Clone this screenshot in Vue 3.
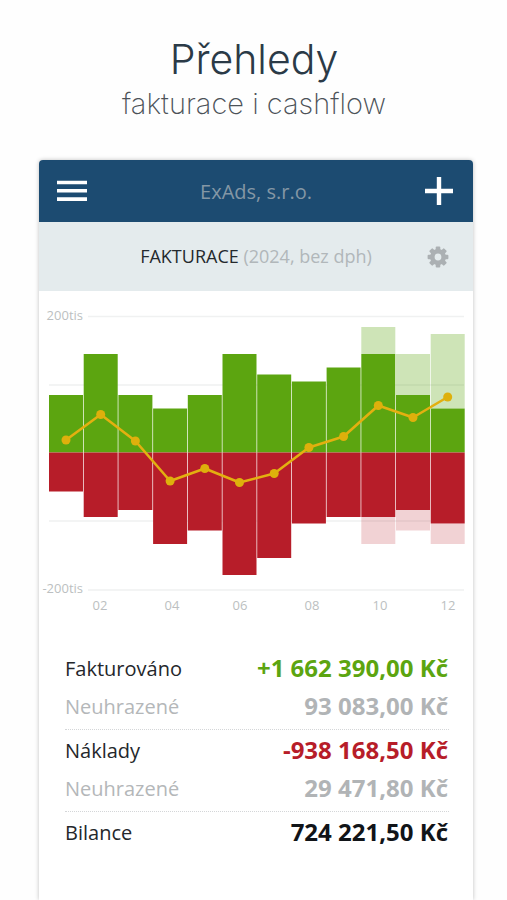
<template>
  <div class="page">
    <header class="intro">
      <h1>Přehledy</h1>
      <p>fakturace i cashflow</p>
    </header>

    <main class="card">
      <nav class="topbar">
        <button type="button" class="icon-btn" aria-label="Menu">
          <svg width="30" height="22" viewBox="0 0 30 22">
            <path d="M0 2.5H30M0 10.8H30M0 19.1H30" stroke="#fff" stroke-width="3.6" />
          </svg>
        </button>
        <span class="company">ExAds, s.r.o.</span>
        <button type="button" class="icon-btn" aria-label="Přidat">
          <svg width="28" height="28" viewBox="0 0 28 28">
            <path d="M14 0V28M0 14H28" stroke="#fff" stroke-width="4.4" />
          </svg>
        </button>
      </nav>

      <div class="subbar">
        <h2>FAKTURACE <span>(2024, bez dph)</span></h2>
        <button type="button" class="icon-btn" aria-label="Nastavení">
          <svg width="22" height="22" viewBox="-11 -11 22 22">
            <g fill="#abb0b3">
              <rect v-for="a in 4" :key="a" x="-2.3" y="-10.4" width="4.6" height="20.8" rx="1" :transform="`rotate(${a * 45})`" />
              <circle r="8" />
            </g>
            <circle r="3.4" fill="#e4ebed" />
          </svg>
        </button>
      </div>

      <svg class="chart" viewBox="0 0 434 340" role="img" aria-label="Fakturace podle měsíců">
        <g stroke="#f0f1f1" stroke-width="1.4">
          <path d="M49 25.5H425M10 94H425M10 230H425M49 299H425" />
        </g>

        <g v-for="(m, i) in months" :key="i">
          <rect v-if="m.incomeOpen" :x="barX(i)" :y="ZERO - m.incomeOpen" :width="BAR" :height="m.incomeOpen - m.income" fill="#5ca510" fill-opacity="0.3" />
          <rect v-if="m.costOpen" :x="barX(i)" :y="ZERO + m.cost" :width="BAR" :height="m.costOpen - m.cost" fill="#b71d29" fill-opacity="0.2" />
          <rect :x="barX(i)" :y="ZERO - m.income" :width="BAR" :height="m.income" fill="#5ca510" />
          <rect :x="barX(i)" :y="ZERO" :width="BAR" :height="m.cost" fill="#b71d29" />
        </g>

        <polyline :points="linePoints" fill="none" stroke="#e3b010" stroke-width="2.6" stroke-linejoin="round" />
        <circle v-for="(m, i) in months" :key="'p' + i" :cx="pointX(i)" :cy="ZERO - m.balance" r="4.5" fill="#deb00c" />

        <g class="axis">
          <text x="44" y="29" text-anchor="end">200tis</text>
          <text x="44" y="302" text-anchor="end">-200tis</text>
          <text v-for="l in labels" :key="l.text" :x="l.x" y="319" text-anchor="middle">{{ l.text }}</text>
        </g>
      </svg>

      <dl class="summary">
        <div v-for="(group, g) in summary" :key="g" class="group">
          <div v-for="row in group" :key="row.label" class="row" :class="row.kind">
            <dt>{{ row.label }}</dt>
            <dd>{{ row.value }}</dd>
          </div>
        </div>
      </dl>
    </main>
  </div>
</template>

<script setup>
import { computed } from 'vue';

const ZERO = 161.5;
const BAR = 34;
const STEP = 34.7;

const months = [
  { income: 57.5, cost: 39, balance: 12.5 },
  { income: 98.5, cost: 64.5, balance: 38 },
  { income: 57.5, cost: 57.5, balance: 11.5 },
  { income: 44, cost: 91.5, balance: -28.5 },
  { income: 57.5, cost: 78, balance: -16 },
  { income: 98.5, cost: 122.5, balance: -30 },
  { income: 78, cost: 105.5, balance: -21 },
  { income: 71, cost: 71, balance: 5 },
  { income: 85, cost: 64.5, balance: 16 },
  { income: 98.5, incomeOpen: 125.5, cost: 64.5, costOpen: 91.5, balance: 47 },
  { income: 57.5, incomeOpen: 98.5, cost: 57.5, costOpen: 78, balance: 35 },
  { income: 44, incomeOpen: 118.5, cost: 71, costOpen: 91.5, balance: 55.5 },
];

const labels = [
  { text: '02', x: 61 },
  { text: '04', x: 133 },
  { text: '06', x: 201 },
  { text: '08', x: 273 },
  { text: '10', x: 341 },
  { text: '12', x: 409 },
];

const barX = (i) => 10 + i * STEP;
const pointX = (i) => 27 + i * STEP;

const linePoints = computed(() =>
  months.map((m, i) => `${pointX(i)},${ZERO - m.balance}`).join(' ')
);

const summary = [
  [
    { label: 'Fakturováno', value: '+1 662 390,00 Kč', kind: 'income' },
    { label: 'Neuhrazené', value: '93 083,00 Kč', kind: 'muted' },
  ],
  [
    { label: 'Náklady', value: '-938 168,50 Kč', kind: 'cost' },
    { label: 'Neuhrazené', value: '29 471,80 Kč', kind: 'muted' },
  ],
  [{ label: 'Bilance', value: '724 221,50 Kč', kind: 'total' }],
];
</script>

<style>
body {
  background: #fefefe;
}
</style>

<style scoped>
.page {
  display: flex;
  flex-direction: column;
  box-sizing: border-box;
  min-height: 100vh;
  padding: 32px 34px 0 39px;
  font-family: "Open Sans", "Noto Sans", sans-serif;
}
.intro {
  height: 128px;
  padding-right: 4px;
  text-align: center;
  font-family: Inter, "Liberation Sans", sans-serif;
}
h1 {
  margin: 0;
  font-size: 41px;
  line-height: 54px;
  font-weight: 300;
  color: #2b3a47;
}
.intro p {
  margin: 0;
  font-size: 29px;
  line-height: 36px;
  font-weight: 200;
  color: #4c5258;
}
.card {
  flex: 1;
  border-radius: 4px 4px 0 0;
  background: #fff;
  box-shadow: 0 0 4px rgba(0, 0, 0, 0.25);
}
.topbar,
.subbar {
  display: flex;
  align-items: center;
  justify-content: space-between;
}
.topbar {
  height: 62px;
  padding: 0 20px 0 18px;
  border-radius: 4px 4px 0 0;
  background: #1c4b71;
}
.company {
  font-size: 20px;
  color: #8497a5;
}
.icon-btn {
  display: flex;
  padding: 0;
  border: none;
  background: none;
  cursor: pointer;
}
.subbar {
  height: 69px;
  padding: 0 24px;
  background: #e4ebed;
}
h2 {
  flex: 1;
  margin: 0;
  padding: 0 0 2px 22px;
  text-align: center;
  font-size: 18px;
  font-weight: 400;
  color: #24292d;
}
h2 span {
  color: #b1b7ba;
}
.chart {
  display: block;
  width: 100%;
}
.axis {
  font-size: 13px;
  fill: #bcbfc1;
}
.summary {
  margin: 0;
  padding: 17px 24px 24px 26px;
}
.group {
  padding: 2px 0 3px;
  border-bottom: 1px dotted #d4d6d8;
}
.group:last-child {
  border-bottom: none;
}
.row {
  display: flex;
  align-items: center;
  justify-content: space-between;
  height: 38px;
  padding-right: 1px;
}
dt {
  padding-bottom: 2px;
  font-size: 20px;
  color: #24272b;
}
dd {
  margin: 0;
  padding-bottom: 4px;
  font-size: 24px;
  font-weight: 700;
}
.income dd {
  color: #5ca510;
}
.cost dd {
  color: #b71d29;
}
.total dd {
  color: #111418;
}
.muted dt {
  color: #b4b7b9;
}
.muted dd {
  color: #b1b4b6;
}
</style>
